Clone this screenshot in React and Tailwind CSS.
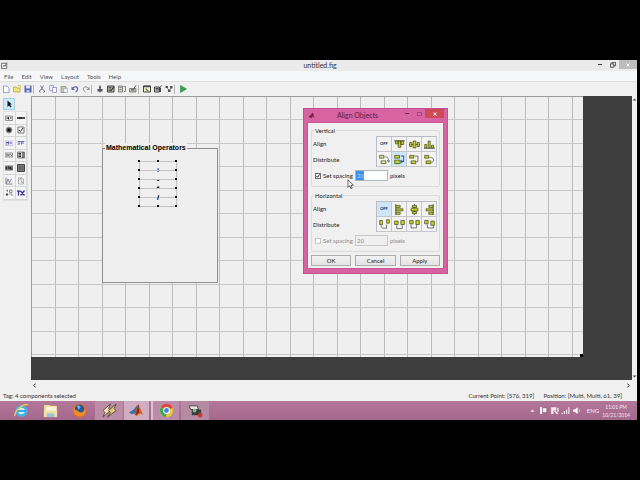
import React from "react";

const gridStep = 23.5;
const gridX = Array.from({ length: 23 }, (_, i) => Math.round(23.5 + i * gridStep));
const gridY = Array.from({ length: 11 }, (_, i) => Math.round(23 + i * gridStep));

function Glyph({ children, className = "w-[9px] h-[9px]" }) {
  return (
    <svg viewBox="0 0 16 16" className={className} aria-hidden="true">
      {children}
    </svg>
  );
}

/* ---------- main toolbar ---------- */

const play = <path d="M3 1l12 7-12 7z" fill="#2fa84a" stroke="#1d7a33" />;

const toolGroups = [
  [
    ["New figure", <path d="M3 2h7l4 4v9H3z" fill="#fff" stroke="#7c84b8" strokeWidth="1.5" />],
    ["Open", <><path d="M1 14V4h5l2 2h6v8z" fill="#f3e27a" stroke="#b79f3c" strokeWidth="1.5" /><path d="M10 1h5v4" fill="none" stroke="#e0c040" strokeWidth="2" /></>],
    ["Save", <><path d="M1 1h14v14H1z" fill="#5767b0" /><path d="M4 1h8v6H4z" fill="#e4e8fa" /><path d="M5 10h6v5H5z" fill="#c0c6e4" /></>],
  ],
  [
    ["Cut", <path d="M5 1l5 9M11 1L6 10M5 15a2 2 0 1 1 1-5M11 15a2 2 0 1 0-1-5" fill="none" stroke="#757b98" strokeWidth="2" />],
    ["Copy", <><path d="M1 1h8v10H1z" fill="#edf0fb" stroke="#8f98bd" strokeWidth="1.5" /><path d="M7 5h8v10H7z" fill="#f8f9ff" stroke="#8089b3" strokeWidth="1.5" /></>],
    ["Paste", <><path d="M2 3h10v12H2z" fill="#c9c7b5" stroke="#8a8a80" strokeWidth="1.5" /><path d="M7 7h8v8H7z" fill="#eef0fb" stroke="#8089b3" /></>],
    ["Undo", <><path d="M3 7c4-5 11-4 10 2 0 2-2 4-4 5" fill="none" stroke="#5a68b4" strokeWidth="2.5" /><path d="M1 3v7h7z" fill="#5a68b4" /></>],
    ["Redo", <><path d="M13 7C9 2 2 3 3 9c0 2 2 4 4 5" fill="none" stroke="#8a8a92" strokeWidth="2" /><path d="M15 3v7H9z" fill="#8a8a92" /></>],
  ],
  [
    ["Align objects", <><path d="M8 1v14" stroke="#555" strokeWidth="2" /><path d="M6 3h4v4H6zM3 8h10v5H3z" fill="#555" /></>],
    ["Menu editor", <><path d="M1 2h13v12H1z" fill="#c4c4b4" stroke="#444" strokeWidth="2" /><path d="M3 5h6M3 8h5M3 11h6" stroke="#333" strokeWidth="1.5" /><path d="M14 3l-6 8" stroke="#333" strokeWidth="2.5" /></>],
    ["Tab order editor", <><path d="M1 2h8v12H1z" fill="#d8d8ce" stroke="#666" strokeWidth="1.5" /><path d="M3 5h4M3 9h4M11 3h4v10h-3" fill="none" stroke="#666" strokeWidth="1.5" /></>],
    ["Toolbar editor", <><path d="M1 7h13v7H1z" fill="#c4c4bc" stroke="#666" strokeWidth="1.5" /><path d="M4 10h7M14 1L8 9" stroke="#555" strokeWidth="2" /></>],
  ],
  [
    ["M-file editor", <><path d="M1 2h14v12H1z" fill="#f3f3d8" stroke="#444" strokeWidth="2" /><path d="M1 3h14" stroke="#444" strokeWidth="3" /><path d="M5 7l6 6" stroke="#7b7b22" strokeWidth="2.5" /></>],
    ["Property inspector", <><path d="M1 4h10v10H1z" fill="#d0d4e4" stroke="#444" strokeWidth="2" /><path d="M3 7h6M3 10h6M15 1L9 9M13 6v8" stroke="#444" strokeWidth="2" /></>],
    ["Object browser", <><path d="M3 4l6 8M12 4L9 12" stroke="#666" strokeWidth="1.5" /><path d="M1 2h5v4H1zM6 9h5v5H6zM10 2h5v5h-5z" fill="#555" /></>],
  ],
  [["Run figure", play]],
];

function Toolbar() {
  return (
    <div className="flex h-[14px] items-center bg-[#f0f0f0]" role="toolbar" aria-label="Figure">
      {toolGroups.map((group, g) => (
        <div key={g} className="flex items-center">
          {g > 0 && <span className="mr-[2px] h-[9px] w-px bg-[#b4b4b4]" />}
          {group.map(([name, icon]) => (
            <button key={name} aria-label={name} className="flex w-[11px] items-center justify-center">
              <Glyph className="h-[8px] w-[8px]">{icon}</Glyph>
            </button>
          ))}
        </div>
      ))}
    </div>
  );
}

/* ---------- component palette ---------- */

const palette = [
  ["Push button", <><path d="M1 4h14v9H1z" fill="#e4e4e4" stroke="#777" strokeWidth="1.5" /><path d="M3 8h3M7 6v5M10 8h3" stroke="#333" strokeWidth="2" /></>],
  ["Slider", <><path d="M0 6h16v4H0z" fill="#555" /><path d="M3 8h7" stroke="#222" strokeWidth="3" /></>],
  ["Radio button", <><circle cx="8" cy="8" r="6" fill="#555" stroke="#999" strokeWidth="2" /><circle cx="8" cy="8" r="3" fill="#111" /></>],
  ["Check box", <><path d="M2 2h12v12H2z" fill="#f8f8f8" stroke="#777" strokeWidth="2" /><path d="M4 8l3 3 5-7" fill="none" stroke="#333" strokeWidth="2" /></>],
  ["Edit text", <><path d="M0 4h16v9H0z" fill="#e3e3f7" stroke="#a5a5cc" /><path d="M2 7h4M7 5v6M9 8h5M2 10h3" stroke="#6868b0" strokeWidth="2" /></>],
  ["Static text", <path d="M1 5h14M4 5v6M9 5v6M7 8h7M1 10h4" stroke="#7272b4" strokeWidth="2" />],
  ["Pop-up menu", <><path d="M0 4h16v8H0z" fill="#ddd" stroke="#777" strokeWidth="1.5" /><path d="M2 8h7M11 7l2 2 2-2" fill="none" stroke="#444" strokeWidth="2" /></>],
  ["Listbox", <><path d="M1 2h14v12H1z" fill="#ddd" stroke="#555" strokeWidth="1.5" /><path d="M3 5h5M3 8h5M3 11h5M12 2v12" stroke="#222" strokeWidth="2" /></>],
  ["Toggle button", <><path d="M0 3h16v10H0z" fill="#777" /><path d="M3 6v4M6 6h2v4M11 6v4h3" fill="none" stroke="#222" strokeWidth="2" /></>],
  ["Table", <><path d="M1 1h14v14H1z" fill="#888" stroke="#444" strokeWidth="2" /><path d="M1 6h14M1 10h14M6 1v14M11 1v14" stroke="#444" /></>],
  ["Axes", <><path d="M2 1v13h13" fill="none" stroke="#555" strokeWidth="1.5" /><path d="M3 12l3-8 3 7 4-7" fill="none" stroke="#6464a8" strokeWidth="1.5" /></>],
  ["Panel", <><path d="M3 4h10v10H3zM3 1v3" fill="none" stroke="#999" strokeWidth="1.5" /><path d="M6 2h4M8 7l3 5" stroke="#888" strokeWidth="2" /></>],
  ["Button group", <><path d="M2 3h4M5 1v5M9 2h5v5H9zM9 10h5v4" fill="none" stroke="#777" strokeWidth="1.5" /><circle cx="4" cy="11" r="2.5" fill="#555" /></>],
  ["ActiveX control", <path d="M0 4h7M3 4v9M7 4l8 9M15 3L7 13" stroke="#33339a" strokeWidth="2.5" />],
];

function Palette() {
  return (
    <aside className="w-[31px] shrink-0 bg-[#f0f0f0] px-[3px] pt-[2px]">
      <button aria-label="Select" className="mb-px flex h-[12px] w-[12px] items-center justify-center border border-[#9fd0ea] bg-[#cfeaf8]">
        <Glyph className="h-[8px] w-[8px]"><path d="M5 1v13l3-3 3 4 2-2-3-4h4z" fill="#111" /></Glyph>
      </button>
      <div className="grid h-[90px] grid-cols-2 grid-rows-7 border border-[#e0e0e0]">
        {palette.map(([name, icon]) => (
          <button key={name} aria-label={name} className="flex items-center justify-center border-r border-b border-[#d6d6d6] bg-[#f4f4f4]">
            <Glyph className="h-[8px] w-[8px]">{icon}</Glyph>
          </button>
        ))}
      </div>
    </aside>
  );
}

/* ---------- figure canvas ---------- */

const operators = [
  ["+", "top-[65px]"],
  ["-", "top-[74px]"],
  ["*", "top-[83px]"],
  ["/", "top-[92px]"],
];
const handleRows = [0, 9, 18, 27, 36, 45];

function Figure() {
  return (
    <div className="relative mr-[49px] mb-[23px] flex-1 bg-[#efefef]">
      <svg className="absolute inset-0 h-full w-full" aria-hidden="true">
        {gridX.map((x) => <rect key={x} x={x} y="0" width="1" height="100%" fill="#bcbcbc" />)}
        {gridY.map((y) => <rect key={y} x="0" y={y} width="100%" height="1" fill="#c8c8c8" />)}
        <rect x="0" y="0" width="100%" height="1" fill="#9c9c9c" />
        <rect x="0" y="0" width="1" height="100%" fill="#9c9c9c" />
      </svg>
      <fieldset className="absolute top-[47px] left-[71px] h-[140px] w-[116px] border border-[#8f8f8f] bg-[#efefef]">
        <legend className="ml-[2px] h-[10px] bg-[#efefef] px-px font-['Liberation_Sans',sans-serif] text-[7px] leading-[10px] font-bold text-black">Mathematical Operators</legend>
      </fieldset>
      {operators.map(([label, top]) => (
        <button key={label} className={`absolute left-[108px] h-[19px] w-[38px] border border-[#c2c2c2] font-['Liberation_Sans',sans-serif] text-[8px] leading-[16px] font-bold text-black ${top}`}>
          {label}
        </button>
      ))}
      <svg className="absolute top-[64px] left-[107px] h-[48px] w-[40px]" aria-hidden="true">
        {handleRows.map((y) => (
          <React.Fragment key={y}>
            <rect x="0" y={y} width="2" height="2" fill="#111" />
            <rect x="37" y={y} width="2" height="2" fill="#111" />
          </React.Fragment>
        ))}
        <rect x="19" y="0" width="2" height="2" fill="#111" />
        <rect x="19" y="45" width="2" height="2" fill="#111" />
      </svg>
      <span className="absolute right-0 bottom-0 h-[3px] w-[3px] bg-black" />
    </div>
  );
}

/* ---------- align dialog ---------- */

const box = { fill: "#c3cf2e", stroke: "#3f4413", strokeWidth: 1 };

const off = "OFF";
const verticalIcons = [
  ["Vertical align off", off],
  ["Align top", <><path d="M0 2.5h16" stroke="#333" /><path d="M2 3h4v4H2zM6 3h4v9H6zM10 3h4v5h-4z" {...box} /></>],
  ["Align middle", <><path d="M0 8h16" stroke="#333" /><path d="M1 5h3v6H1zM6 3h4v10H6zM12 5h3v6h-3z" {...box} /></>],
  ["Align bottom", <><path d="M0 13.5h16" stroke="#333" /><path d="M1 8h3v5H1zM6 3h3v10H6zM11 9h3v4h-3z" {...box} /></>],
  ["Vertical distribute off", <><path d="M1 2h6v4H1zM3 10h7v4H3z" {...box} fill="#e0e49c" /><path d="M8 4c5 0 6 2 6 7M12 9l2 3 2-3" fill="none" stroke="#444" /></>],
  ["Distribute spacing vertically", <><path d="M1 2h7v4H1zM1 9h8v5H1z" {...box} /><path d="M10 3h4v8h-3M12 9l-2 2 2 2" fill="none" stroke="#2463a8" strokeWidth="1.5" /></>],
  ["Distribute tops", <><path d="M1 2h6v4H1zM3 10h7v4H3z" {...box} /><path d="M8 3h5v8h-2" fill="none" stroke="#444" /></>],
  ["Distribute bottoms", <><path d="M1 2h6v4H1zM3 10h7v4H3z" {...box} /><path d="M8 5c5 0 6 2 6 5l-3 3" fill="none" stroke="#444" /></>],
];
const horizontalIcons = [
  ["Horizontal align off", off],
  ["Align left", <><path d="M2.5 0v16" stroke="#333" /><path d="M3 2h6v3H3zM3 7h10v3H3zM3 12h6v3H3z" {...box} /></>],
  ["Align center", <><path d="M8 0v16" stroke="#333" /><path d="M5 2h6v3H5zM3 6h10v4H3zM5 11h6v3H5z" {...box} /></>],
  ["Align right", <><path d="M13.5 0v16" stroke="#333" /><path d="M7 2h6v3H7zM3 7h10v3H3zM7 12h6v3H7z" {...box} /></>],
  ["Horizontal distribute off", <><path d="M1 2h4v6H1zM11 1h4v5h-4z" {...box} /><path d="M3 9c0 5 3 5 8 4M11 8v6" fill="none" stroke="#444" /></>],
  ["Distribute spacing horizontally", <><path d="M1 3h5v5H1zM10 2h5v6h-5z" {...box} /><path d="M4 9v5h8V9" fill="none" stroke="#444" /></>],
  ["Distribute lefts", <><path d="M1 2h5v5H1zM10 2h5v6h-5z" {...box} /><path d="M3 8v5h8V9" fill="none" stroke="#444" /></>],
  ["Distribute rights", <><path d="M1 2h5v5H1zM10 3h5v6h-5z" {...box} /><path d="M5 8v5h9v-4" fill="none" stroke="#444" /></>],
];

function AlignGroup({ title, icons, selected, spacing, enabled }) {
  const id = `${title}-spacing`;
  return (
    <fieldset className="h-[61px] rounded-[2px] border border-[#dcdcdc] pt-px pr-[2px] pl-px">
      <legend className="ml-px h-[9px] px-px leading-[9px]">{title}</legend>
      <div className="flex justify-between">
        <div className="flex flex-col">
          <span className="h-[16px] leading-[16px]">Align</span>
          <span className="h-[15px] leading-[15px]">Distribute</span>
        </div>
        <div className="grid h-[31px] w-[61px] grid-cols-4 border-t border-l border-[#b9bcc4]">
          {icons.map(([name, icon], i) => (
            <button
              key={name}
              aria-label={name}
              className={`flex items-center justify-center border-r border-b border-[#c4c6cc] text-[4px] font-bold ${i === selected[0] || i === selected[1] ? "bg-[#cde6fa]" : "bg-[#f3f3f3]"}`}
            >
              {icon === off ? off : <Glyph className="h-[11px] w-[11px]">{icon}</Glyph>}
            </button>
          ))}
        </div>
      </div>
      <div className={`mt-[3px] flex h-[11px] items-center ${enabled ? "" : "text-[#8c8c8c]"}`}>
        <span className="relative mr-[2px] ml-[2px] flex h-[6px] w-[6px]">
          <input id={id + "-on"} type="checkbox" defaultChecked={enabled} disabled={!enabled} className={`h-[6px] w-[6px] appearance-none border bg-white ${enabled ? "border-[#707070]" : "border-[#c4c4c4]"}`} />
          {enabled && (
            <svg viewBox="0 0 6 6" className="pointer-events-none absolute inset-0" aria-hidden="true">
              <path d="M1.5 3l1 1.3L4.6 1.4" fill="none" stroke="#222" strokeWidth="1" />
            </svg>
          )}
        </span>
        <label htmlFor={id + "-on"} className="w-[32px] whitespace-nowrap">Set spacing</label>
        <input
          id={id}
          aria-label="Spacing in pixels"
          defaultValue={spacing}
          disabled={!enabled}
          className={`h-[11px] w-[33px] border px-px ${enabled ? "border-[#a9b4c4] bg-white bg-linear-to-r from-[#3c93e8] from-25% to-white to-25% text-[#a9d0f6]" : "border-[#c8c8c8] bg-[#f0f0f0]"}`}
        />
        <label htmlFor={id} className="ml-[2px]">pixels</label>
      </div>
    </fieldset>
  );
}

function AlignDialog() {
  return (
    <section role="dialog" aria-label="Align Objects" className="absolute top-[48px] left-[303px] w-[145px] border border-[#c4508f] bg-[#d863a2] px-[3px] pb-[4px] text-[6px] text-[#222]">
      <header className="flex h-[13px] items-start">
        <Glyph className="mt-[3px] ml-px h-[7px] w-[7px]">
          <path d="M1 10l5-3 5-6 4 12-4-3-4 4z" fill="#7c2340" />
        </Glyph>
        <h2 className="flex-1 text-center text-[7px] leading-[13px] text-[#5b1d42]">Align Objects</h2>
        <button aria-label="Minimize" className="flex h-[9px] w-[13px] items-center justify-center"><span className="h-px w-[4px] bg-[#70264f]" /></button>
        <button aria-label="Maximize" className="flex h-[9px] w-[12px] items-center justify-center"><span className="h-[4px] w-[5px] border border-[#a9447c]" /></button>
        <button aria-label="Close" className="flex h-[9px] w-[19px] items-center justify-center bg-[#cf4a58]">
          <Glyph className="h-[4px] w-[4px]"><path d="M2 2l12 12M14 2L2 14" stroke="#fff" strokeWidth="4" /></Glyph>
        </button>
      </header>
      <div className="border border-[#c35a94] bg-[#f0f0f0] px-[3px] pt-[3px] pb-[2px]">
        <div className="flex flex-col gap-[4px]">
          <AlignGroup title="Vertical" icons={verticalIcons} selected={[null, 5]} spacing="20" enabled />
          <AlignGroup title="Horizontal" icons={horizontalIcons} selected={[0, null]} spacing="20" enabled={false} />
        </div>
        <div className="mt-[3px] grid grid-cols-3 gap-[4px]">
          {["OK", "Cancel", "Apply"].map((label) => (
            <button key={label} className="h-[11px] border border-[#adadad] bg-linear-to-b from-[#f2f2f2] to-[#e4e4e4] leading-[9px]">{label}</button>
          ))}
        </div>
      </div>
    </section>
  );
}

/* ---------- taskbar ---------- */

const apps = [
  ["Internet Explorer", "mr-[2px] w-[28px]", <><circle cx="8" cy="8.500" r="5" fill="#cdeefa" stroke="#45b4e4" strokeWidth="3" /><path d="M4 8.500h9" stroke="#3aa6dc" strokeWidth="2" /><path d="M1 14C0 9 10 0 15 2" fill="none" stroke="#f0c850" strokeWidth="1.500" /></>],
  ["File Explorer", "mr-[2px] w-[27px]", <><path d="M1 2h6l1 1h7v12H1z" fill="#ecd78c" /><path d="M3 4h11v5H3z" fill="#fbf6df" /><path d="M1 8h14v7H1z" fill="#f3e2a2" /><path d="M4 11h8v4H4z" fill="#96c6dd" /></>],
  ["Firefox", "mr-[2px] w-[27px]", <><circle cx="8" cy="8" r="7.500" fill="#e2701f" /><circle cx="8" cy="6.500" r="5" fill="#27589d" /><path d="M5 3c2-1 4 0 4 2L7 7z" fill="#7fb0d8" /><path d="M2 4c1 5 3 3 5 5s6 1 7-3c2 6-3 9-7 8s-6-5-5-10z" fill="#f08c28" /></>],
  ["Winamp", "mr-px w-[28px] bg-[#bb8ba8]", <><path d="M9 1L1 8l2 2-2 5 8-7-2-2z" fill="#efe3b4" stroke="#5a4a36" /><path d="M15 1L7 8l2 2-3 5 9-7-2-2z" fill="#e2c878" stroke="#5a4a36" /></>],
  ["MATLAB", "mr-[2px] w-[25px] bg-[#d0aec2]", <><path d="M0 10l5-3 5-6-3 12-2-2-2 1z" fill="#3b6fa4" /><path d="M10 1l5 12-3-2-4 3-2-2z" fill="#d65f22" /><path d="M10 1l1 9-4 3z" fill="#8d2d1a" /></>],
  ["Chrome", "mr-[2px] w-[28px] border-l-2 border-[#d9c1cf] bg-[#bb8ba8]", <><circle cx="8" cy="8" r="7" fill="#e8c93a" /><path d="M8 8L2 4.500A7 7 0 0 1 14.600 5z" fill="#dc4a3d" /><path d="M8 8L2 4.500A7 7 0 0 0 7.500 15z" fill="#3fa455" /><circle cx="8" cy="8" r="3.200" fill="#4285d8" stroke="#fff" strokeWidth="1.200" /></>],
  ["Recorder", "w-[28px] bg-[#b78aa4]", <><path d="M1 3h9l1 4H3z" fill="#e5e5dc" stroke="#444" /><path d="M4 7h10v6H4z" fill="#34403a" /><circle cx="7" cy="8" r="2" fill="#8fae96" /><circle cx="13" cy="13" r="2.500" fill="#c83a32" /></>],
];

const tray = [
  ["Show hidden icons", <path d="M4 10l4-4 4 4z" fill="#f4e6ee" />],
  ["Action center", <><path d="M2 2h4v12H2z" fill="#fff" /><path d="M6 3h8v9H6z" fill="#f5ecf2" stroke="#604058" /></>],
  ["Safely remove", <><path d="M2 2h9v6H6v6H2z" fill="#f5ecf2" /><path d="M8 9l6 5M14 3v7" stroke="#f5ecf2" strokeWidth="2.500" /></>],
  ["Network", <path d="M1 14h2v-2H1zM5 14h2v-5H5zM9 14h2V6H9zM13 14h2V2h-2z" fill="#f7eef3" />],
  ["Volume", <><path d="M2 6h3l5-4v12l-5-4H2z" fill="#fff" /><path d="M12 5c2 2 2 4 0 6" stroke="#eedbe5" fill="none" strokeWidth="1.500" /></>],
];

function Taskbar() {
  return (
    <nav className="flex h-[19px] items-stretch bg-linear-to-b from-[#b27799] to-[#a3688b] pl-[7px]" aria-label="Taskbar">
      {apps.map(([name, style, icon]) => (
        <button key={name} aria-label={name} className={`flex items-center justify-center ${style}`}>
          <Glyph className="h-[15px] w-[15px]">{icon}</Glyph>
        </button>
      ))}
      <div className="ml-auto flex items-center pr-[7px] text-[6px] text-[#f6eaf1]">
        {tray.map(([name, icon]) => (
          <button key={name} aria-label={name} className="flex w-[11px] items-center justify-center">
            <Glyph className="h-[9px] w-[9px]">{icon}</Glyph>
          </button>
        ))}
        <span className="ml-[5px]">ENG</span>
        <time className="ml-[3px] text-center text-[5px] leading-[8px]">11:01 PM<br />10/21/2014</time>
      </div>
    </nav>
  );
}

export default function App() {
  return (
    <div className="flex min-h-screen flex-col bg-black pt-15 pr-[3px] pb-15 font-[Lato,'Noto_Sans',sans-serif]">
      <main className="relative flex flex-1 flex-col bg-[#f0f0f0] text-[6px] text-[#333]">
        <header className="flex h-[11px] items-start bg-[#ebebeb]">
          <Glyph className="mt-[2px] ml-px h-[7px] w-[7px]">
            <path d="M1 3h12v12H1z" fill="#f7f7f7" stroke="#666" strokeWidth="2" />
            <path d="M4 12l3-5 2 3 5-9" fill="none" stroke="#666" strokeWidth="2" />
          </Glyph>
          <h1 className="flex-1 pl-[38px] text-center text-[7px] leading-[11px] text-[#333]">untitled.fig</h1>
          <button aria-label="Minimize" className="flex h-[9px] w-[12px] items-center justify-center"><span className="h-px w-[4px] bg-[#444]" /></button>
          <button aria-label="Restore" className="flex h-[9px] w-[13px] items-center justify-center">
            <Glyph className="h-[6px] w-[6px]"><path d="M1 5h9v9H1zM5 5V1h10v9h-4" fill="none" stroke="#444" strokeWidth="2.500" /></Glyph>
          </button>
          <button aria-label="Close" className="flex h-[9px] w-[18px] items-center justify-center bg-[#bcbcbc]">
            <Glyph className="h-[4px] w-[4px]"><path d="M2 2l12 12M14 2L2 14" stroke="#fff" strokeWidth="4" /></Glyph>
          </button>
        </header>
        <nav className="flex h-[11px] items-center gap-[8px] border-b border-[#dedede] bg-[#f6f7f9] pl-[4px] text-[#555]" aria-label="Menu">
          {["File", "Edit", "View", "Layout", "Tools", "Help"].map((m) => <button key={m}>{m}</button>)}
        </nav>
        <Toolbar />
        <div className="flex flex-1">
          <Palette />
          <div className="flex flex-1 bg-[#3e3e3e]">
            <Figure />
          </div>
          <div className="flex w-[5px] flex-col justify-between bg-[#f0f0f0] py-px">
            <Glyph className="h-[5px] w-[5px]"><path d="M2 11l6-6 6 6z" fill="#444" /></Glyph>
            <Glyph className="h-[5px] w-[5px]"><path d="M2 5l6 6 6-6z" fill="#444" /></Glyph>
          </div>
        </div>
        <div className="flex h-[10px] items-center justify-between pr-[6px] pl-[32px]">
          <Glyph className="h-[5px] w-[5px]"><path d="M11 2L6 8l5 6" fill="none" stroke="#333" strokeWidth="3" /></Glyph>
          <Glyph className="h-[5px] w-[5px]"><path d="M5 2l5 6-5 6" fill="none" stroke="#333" strokeWidth="3" /></Glyph>
        </div>
        <footer className="flex h-[11px] items-center pr-[15px] pl-[3px]">
          <span>Tag: 4 components selected</span>
          <span className="ml-auto">Current Point: [576, 319]</span>
          <span className="ml-[9px]">Position: [Multi, Multi, 61, 39]</span>
        </footer>
        <Taskbar />
        <AlignDialog />
        <svg viewBox="0 0 8 12" className="pointer-events-none absolute top-[119px] left-[347px] h-[10px] w-[7px]" aria-hidden="true">
          <path d="M1 1v9l2-2 1.500 3.500 1.500-.6L4.600 7.500H7.500z" fill="#fff" stroke="#222" strokeWidth=".8" />
        </svg>
      </main>
    </div>
  );
}
